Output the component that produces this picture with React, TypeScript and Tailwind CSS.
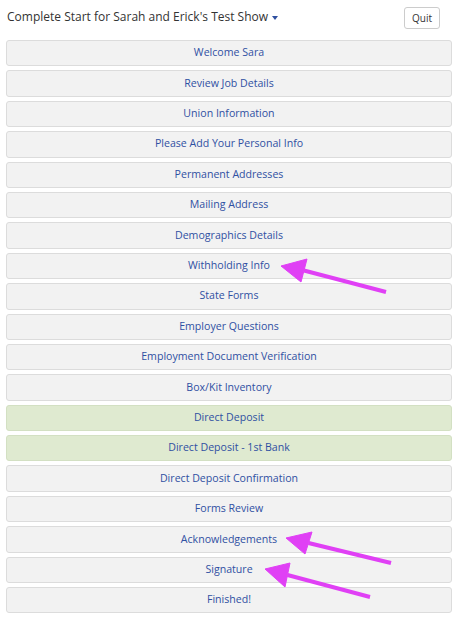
import React from 'react';

type Step = { label: string; done?: boolean };

const steps: Step[] = [
  { label: 'Welcome Sara' },
  { label: 'Review Job Details' },
  { label: 'Union Information' },
  { label: 'Please Add Your Personal Info' },
  { label: 'Permanent Addresses' },
  { label: 'Mailing Address' },
  { label: 'Demographics Details' },
  { label: 'Withholding Info' },
  { label: 'State Forms' },
  { label: 'Employer Questions' },
  { label: 'Employment Document Verification' },
  { label: 'Box/Kit Inventory' },
  { label: 'Direct Deposit', done: true },
  { label: 'Direct Deposit - 1st Bank', done: true },
  { label: 'Direct Deposit Confirmation' },
  { label: 'Forms Review' },
  { label: 'Acknowledgements' },
  { label: 'Signature' },
  { label: 'Finished!' },
];

// annotation arrows: tip, head corners, tail
const arrows = [
  { tip: [281, 266], a: [307, 259], b: [301, 282], tail: [386, 292] },
  { tip: [286, 538], a: [312, 532], b: [305, 554], tail: [391, 563] },
  { tip: [265, 569], a: [290, 563], b: [285, 587], tail: [370, 597] },
];

const App = () => {
  return (
    <div className="relative w-[458px] h-[619px] bg-white overflow-hidden font-['Open_Sans',sans-serif]">
      <div className="flex items-start justify-between pl-[7px] pr-[18px] pt-[7px] h-[40px]">
        <div className="flex items-center text-[12px] text-[#333] leading-[18px] mt-[1px]">
          Complete Start for Sarah and Erick's Test Show
          <span className="ml-[4px] mt-[2px] w-0 h-0 border-l-[3.5px] border-r-[3.5px] border-t-[4px] border-l-transparent border-r-transparent border-t-[#2f50a0]"></span>
        </div>
        <button className="w-[36px] h-[22px] border border-[#ccc] rounded-[3px] bg-white text-[10px] text-[#333]">
          Quit
        </button>
      </div>

      <div className="flex flex-col gap-[4px] px-[6px]">
        {steps.map((s) => (
          <div
            key={s.label}
            className={`h-[26.4px] flex items-center justify-center rounded-[3px] border text-[10.6px] text-[#3050a2] ${
              s.done ? 'bg-[#dfead0] border-[#d3e0c3]' : 'bg-[#f2f2f2] border-[#dcdcdc]'
            }`}
          >
            {s.label}
          </div>
        ))}
      </div>

      <svg className="absolute inset-0 pointer-events-none" width="458" height="619">
        {arrows.map((ar, i) => (
          <g key={i} fill="#e040f5" stroke="#e040f5">
            <line x1={ar.tail[0]} y1={ar.tail[1]} x2={(ar.a[0] + ar.b[0]) / 2} y2={(ar.a[1] + ar.b[1]) / 2} strokeWidth="4" />
            <polygon points={`${ar.tip[0]},${ar.tip[1]} ${ar.a[0]},${ar.a[1]} ${ar.b[0]},${ar.b[1]}`} strokeWidth="1" strokeLinejoin="round" />
          </g>
        ))}
      </svg>
    </div>
  );
};

export default App;
